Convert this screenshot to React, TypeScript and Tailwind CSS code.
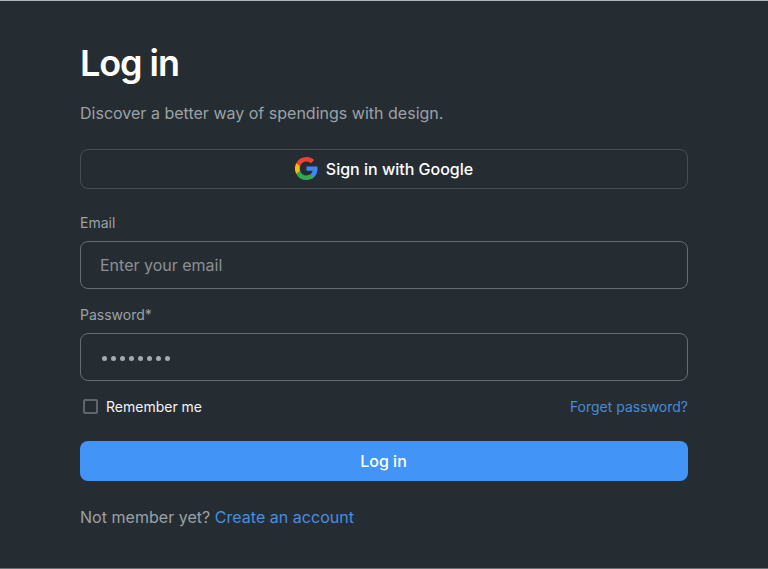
import React from "react";

function GoogleLogo() {
  return (
    <svg viewBox="0 0 24 24" className="h-[23px] w-[23px]" aria-hidden="true">
      <path fill="#4285F4" d="M23.500 12.270c0-.85-.08-1.670-.22-2.450H12v4.640h6.450a5.520 5.520 0 0 1-2.390 3.620v3.010h3.870c2.260-2.090 3.570-5.160 3.570-8.820z" />
      <path fill="#34A853" d="M12 24c3.240 0 5.960-1.080 7.940-2.910l-3.870-3.010c-1.080.72-2.450 1.150-4.070 1.150-3.130 0-5.780-2.110-6.730-4.960H1.280v3.110A12 12 0 0 0 12 24z" />
      <path fill="#FBBC05" d="M5.270 14.270a7.200 7.200 0 0 1 0-4.550V6.610H1.280a12 12 0 0 0 0 10.770l3.990-3.110z" />
      <path fill="#EA4335" d="M12 4.770c1.760 0 3.350.61 4.600 1.800l3.440-3.440C17.950 1.190 15.240 0 12 0A12 12 0 0 0 1.280 6.610l3.990 3.110C6.220 6.880 8.870 4.770 12 4.770z" />
    </svg>
  );
}

export default function App() {
  return (
    <main className="h-[569px] w-full border-t border-b border-t-[#b0b7ba] border-b-[#6c7072] bg-[#262d32] px-20 pt-[39px] font-['Inter',sans-serif] text-[#9ca1a7]">
      <h1 className="h-[46px] text-[36px] leading-[46px] font-semibold tracking-[-1.08px] text-white">Log in</h1>
      <p className="mt-[15px] text-base leading-6 tracking-[0.01px]">Discover a better way of spendings with design.</p>
      <button className="mt-6 flex h-10 w-full items-center justify-center gap-2 rounded-lg border border-[#454f54] pb-px text-base font-medium text-white">
        <GoogleLogo />Sign in with Google
      </button>
      <form>
        <label className="mt-6 block text-sm leading-5">Email</label>
        <input className="mt-2 block h-12 w-full rounded-lg border border-[#656d73] px-[19px] text-base placeholder:text-[#8b9096]" placeholder="Enter your email" />
        <label className="mt-4 block text-sm leading-5">Password*</label>
        <div className="mt-2 flex h-12 items-center gap-1 rounded-lg border border-[#656d73] px-[21px] pt-0.5">
          {Array.from({ length: 8 }, (_, i) => <span key={i} className="h-[5px] w-[5px] rounded-full bg-[#a5aab0]" />)}
        </div>
        <div className="mt-4 flex h-5 items-center justify-between text-sm">
          <label className="flex items-center gap-2 text-[#f2f4f6]"><span className="mb-px ml-[3px] h-[15px] w-[15px] rounded-xs border-2 border-[#60666c]" />Remember me</label>
          <a className="text-[#458bdc]">Forget password?</a>
        </div>
        <button className="mt-6 h-10 w-full rounded-lg bg-[#4294f7] pr-px text-base font-medium text-white">Log in</button>
      </form>
      <p className="mt-6 text-base leading-6 tracking-[0.03px]">Not member yet? <a className="text-[#458fe4]">Create an account</a></p>
    </main>
  );
}
